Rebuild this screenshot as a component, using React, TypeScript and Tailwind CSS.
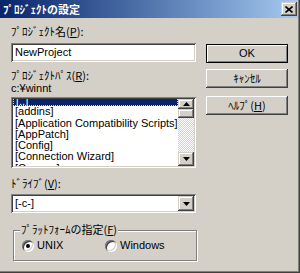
import type { ReactNode } from 'react'

// Win2000-style "project settings" dialog

const jp = "font-['Noto_Sans_CJK_JP','Noto_Sans_CJK_SC',sans-serif]"
const lat = "font-['Liberation_Sans',Arial,sans-serif]"

const sunken =
  'shadow-[inset_1px_1px_0_#808080,inset_-1px_-1px_0_#ffffff,inset_2px_2px_0_#404040,inset_-2px_-2px_0_#d4d0c8]'
const raised =
  'shadow-[inset_-1px_-1px_0_#404040,inset_1px_1px_0_#ffffff,inset_-2px_-2px_0_#808080]'
const scrollBtn =
  'shadow-[inset_-1px_-1px_0_#404040,inset_1px_1px_0_#d4d0c8,inset_-2px_-2px_0_#808080,inset_2px_2px_0_#ffffff]'

const ENTRIES = [
  '[..]',
  '[addins]',
  '[Application Compatibility Scripts]',
  '[AppPatch]',
  '[Config]',
  '[Connection Wizard]',
  '[Cursors]',
]

function Mn({ children }: { children: ReactNode }) {
  return <span className="underline underline-offset-[1px]">{children}</span>
}

function Arrow({ down }: { down?: boolean }) {
  return (
    <svg width="7" height="4" viewBox="0 0 7 4" className="block">
      <path d={down ? 'M0 0h7L3.5 4z' : 'M0 4h7L3.5 0z'} fill="#000" />
    </svg>
  )
}

function Button({ children, isDefault }: { children: ReactNode; isDefault?: boolean }) {
  return (
    <div
      className={`h-[19px] w-full flex items-center justify-center text-[11px] leading-none text-black bg-[#d4d0c8] ${
        isDefault
          ? 'border border-black shadow-[inset_1px_1px_0_#ffffff,inset_-1px_-1px_0_#808080]'
          : raised
      }`}
    >
      {children}
    </div>
  )
}

function Radio({ checked, label }: { checked?: boolean; label: string }) {
  return (
    <div className="flex items-center gap-[3px]">
      <div className={`w-[12px] h-[12px] rounded-full bg-white flex items-center justify-center ${sunken}`}>
        {checked && <div className="w-[4px] h-[4px] rounded-full bg-black" />}
      </div>
      <span className={`${lat} text-[11px] leading-none`}>{label}</span>
    </div>
  )
}

export default function App() {
  return (
    <div className="w-[300px] h-[273px] bg-[#d4d0c8] border-r border-b border-[#404040] text-black select-none">
      <div className="h-full border-r border-b border-[#808080] flex flex-col">
        {/* title bar */}
        <div className="h-[18px] flex items-center bg-linear-to-r from-[#0a246a] to-[#a6caf0] pl-[3px] pr-[1px]">
          <span className={`${jp} flex-1 text-white font-bold text-[11px] leading-none`}>ﾌﾟﾛｼﾞｪｸﾄの設定</span>
          <div className={`w-[16px] h-[14px] bg-[#d4d0c8] flex items-center justify-center ${scrollBtn}`}>
            <svg width="8" height="7" viewBox="0 0 8 7" className="block">
              <path d="M0.5 0.5L7.5 6.5M7.5 0.5L0.5 6.5" stroke="#000" strokeWidth="1.6" />
            </svg>
          </div>
        </div>

        <div className="flex pl-[11px]">
          {/* left column */}
          <div className="w-[185px] flex flex-col">
            <div className={`${jp} mt-[7px] h-[13px] text-[11px] leading-[13px]`}>
              ﾌﾟﾛｼﾞｪｸﾄ名(<Mn>P</Mn>):
            </div>
            <div className={`mt-[5px] h-[19px] bg-white flex items-center pl-[4px] ${sunken}`}>
              <span className={`${lat} text-[11px] leading-none`}>NewProject</span>
            </div>

            <div className={`${jp} mt-[7px] h-[13px] text-[11px] leading-[13px]`}>
              ﾌﾟﾛｼﾞｪｸﾄﾊﾟｽ(<Mn>R</Mn>):
            </div>
            <div className={`${lat} h-[13px] text-[11px] leading-[13px]`}>c:¥winnt</div>

            <div className={`mt-[2px] h-[71px] bg-white p-[2px] flex ${sunken}`}>
              <div className="flex-1 overflow-hidden">
                <div className="-mt-[4px]">
                  {ENTRIES.map((e, i) => (
                    <div
                      key={e}
                      className={`${lat} h-[11.25px] text-[11px] leading-[11px] pl-[2px] whitespace-nowrap ${
                        i === 0 ? 'bg-[#0a246a] text-white border border-dotted border-[#f3d98e] pl-[1px]' : ''
                      }`}
                    >
                      {e}
                    </div>
                  ))}
                </div>
              </div>
              <div className="w-[16px] flex flex-col bg-[repeating-conic-gradient(#ffffff_0_25%,#d4d0c8_0_50%)] bg-size-[2px_2px]">
                <div className={`h-[10px] bg-[#d4d0c8] flex items-center justify-center ${scrollBtn}`}>
                  <Arrow />
                </div>
                <div className={`h-[9px] bg-[#d4d0c8] ${scrollBtn}`} />
                <div className="flex-1" />
                <div className={`h-[14px] bg-[#d4d0c8] flex items-center justify-center ${scrollBtn}`}>
                  <Arrow down />
                </div>
              </div>
            </div>

            <div className={`${jp} mt-[9px] h-[13px] text-[11px] leading-[13px]`}>
              ﾄﾞﾗｲﾌﾞ(<Mn>V</Mn>):
            </div>
            <div className={`mt-[4px] h-[19px] bg-white flex items-center p-[2px] ${sunken}`}>
              <span className={`${lat} flex-1 pl-[2px] text-[11px] leading-none`}>[-c-]</span>
              <div className={`w-[16px] h-full bg-[#d4d0c8] flex items-center justify-center ${scrollBtn}`}>
                <Arrow down />
              </div>
            </div>

            <div className="relative mt-[17px] ml-[2px] w-[184px] h-[31px] border border-[#808080] shadow-[inset_1px_1px_0_#ffffff,1px_1px_0_#ffffff] flex items-center pl-[8px]">
              <span className={`${jp} absolute -top-[8px] left-[6px] px-[1px] bg-[#d4d0c8] text-[11px] leading-[13px]`}>
                ﾌﾟﾗｯﾄﾌｫｰﾑの指定(<Mn>F</Mn>)
              </span>
              <div className="w-[83px]">
                <Radio checked label="UNIX" />
              </div>
              <Radio label="Windows" />
            </div>
          </div>

          {/* right column */}
          <div className={`${jp} ml-[10px] w-[82px] flex flex-col`}>
            <div className="mt-[26px]">
              <Button isDefault>
                <span className={lat}>OK</span>
              </Button>
            </div>
            <div className="mt-[6px]">
              <Button>ｷｬﾝｾﾙ</Button>
            </div>
            <div className="mt-[8px]">
              <Button>
                ﾍﾙﾌﾟ(<Mn>H</Mn>)
              </Button>
            </div>
          </div>
        </div>
      </div>
    </div>
  )
}
